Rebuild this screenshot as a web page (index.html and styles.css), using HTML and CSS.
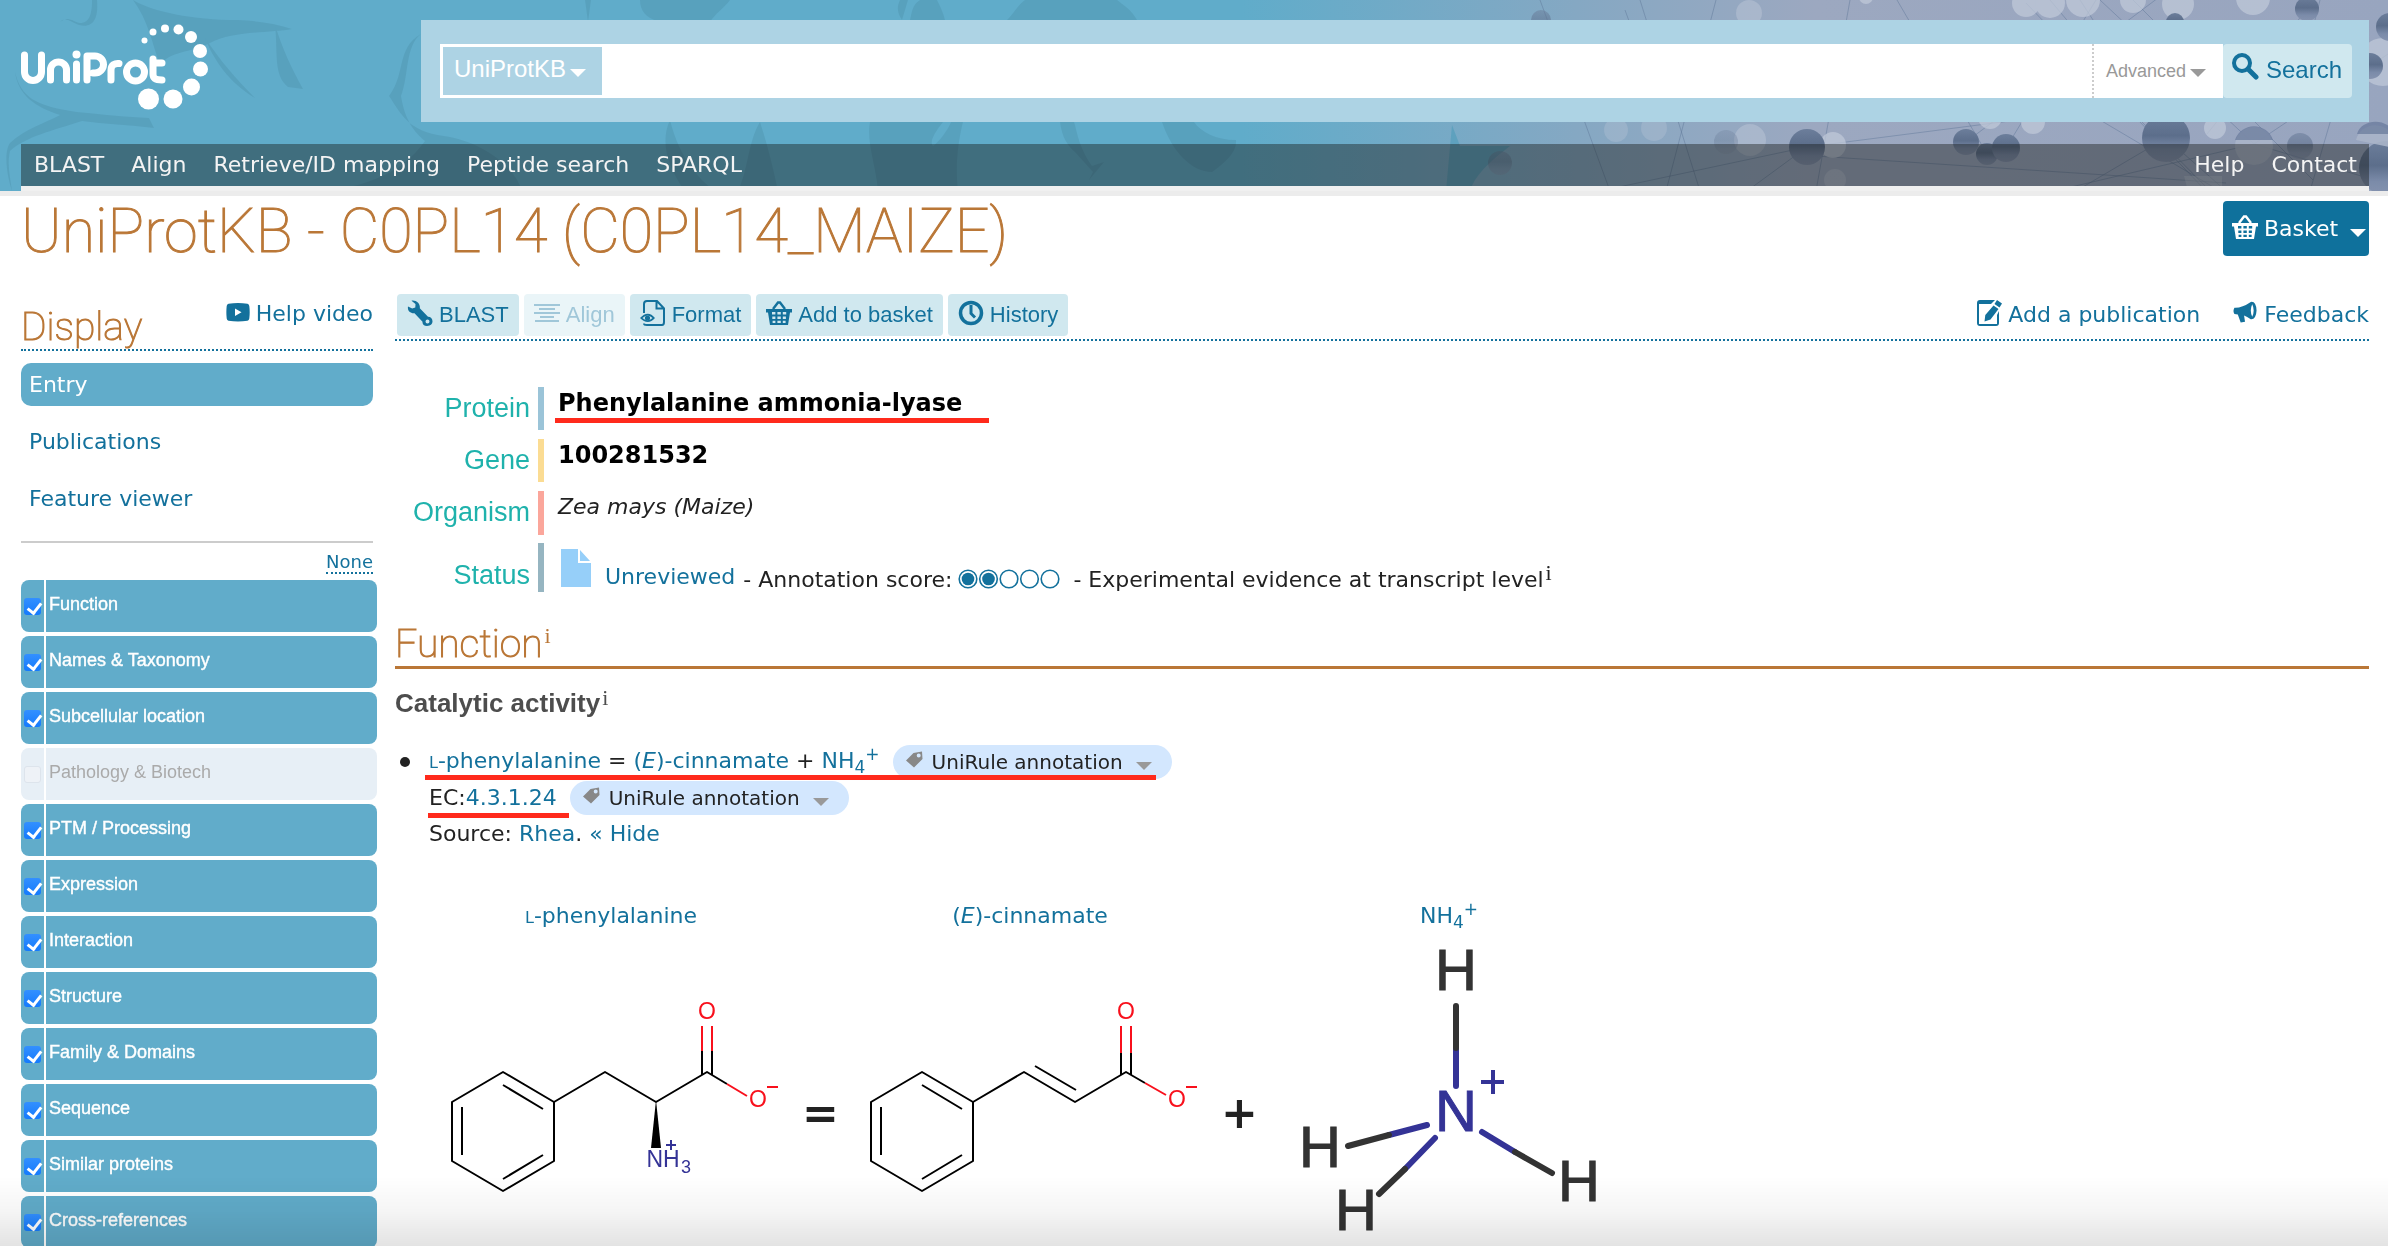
FILE: index.html
```html
<!DOCTYPE html>
<html lang="en">
<head>
<meta charset="utf-8">
<meta name="viewport" content="width=device-width, initial-scale=1">
<title>C0PL14_MAIZE - Phenylalanine ammonia-lyase - UniProtKB</title>
<link rel="stylesheet" href="styles.css">
</head>
<body>
<svg class="sprite" aria-hidden="true">
  <symbol id="i-basket" viewBox="0 0 26 24">
    <path d="M7 8 12 1.5h2L19 8" fill="none" stroke="currentColor" stroke-width="2.4"/>
    <path fill="currentColor" fill-rule="evenodd" d="M0 8h26v3.500h-2L22 24H4L2 11.500H0ZM6 11v2.600h3.400V11Zm5.400 0v2.600h3.400V11Zm5.400 0v2.600h3.400V11ZM6.300 15.400V18h3.100v-2.600Zm5.100 0V18h3.400v-2.600Zm5.400 0V18h3.100v-2.600ZM6.600 19.800V22h2.800v-2.200Zm4.800 0V22h3.400v-2.200Zm5.400 0V22h2.800v-2.200Z"/>
  </symbol>
  <symbol id="i-down" viewBox="0 0 16 8"><path fill="currentColor" d="M0 0h16L8 8Z"/></symbol>
  <symbol id="i-tag" viewBox="0 0 18 17">
    <path fill="currentColor" fill-rule="evenodd" d="M8.500 2 17 .5 17.500 8 9 16.500 1 9.500ZM13.700 2.500a2 2 0 1 0 0 4 2 2 0 0 0 0-4Z"/>
  </symbol>
</svg>

<header class="top">
  <svg class="top-art" viewBox="0 0 2388 191" preserveAspectRatio="xMaxYMid slice" aria-hidden="true">
    <defs>
      <linearGradient id="sky" x1="0" x2="1">
        <stop offset=".52" stop-color="#60acca"/><stop offset=".66" stop-color="#85a8c3"/><stop offset=".76" stop-color="#9ca8c0"/><stop offset="1" stop-color="#98a5bf"/>
      </linearGradient>
      <linearGradient id="ball" x1="0" x2="0" y1="0" y2="1">
        <stop offset="0" stop-color="#6c7e9b"/><stop offset=".45" stop-color="#5c6e8b"/><stop offset=".75" stop-color="#7b8ba9"/><stop offset="1" stop-color="#8593af"/>
      </linearGradient>
    </defs>
    <rect width="2388" height="191" fill="url(#sky)"/>
    <g fill="#579fbb" opacity=".8">
      <path d="M97 0c2 22-6 28-18 25-8-3-14-9-19-3 8-6 10-2 20 1 10 0 12-10 12-23Z"/>
      <path d="M15 72c6 25 20 34 62 40 30 3 50 5 72 6l5 10c-25-3-50-4-72-7-30 10-55 15-72 30-3 14 0 25 2 40-6-18-8-40-2-48 15-14 35-20 50-28-25-8-42-20-45-43Z"/>
      <path d="M133 0c20 12 60 20 105 20 20 1 36 3 54 9-20 4-60 2-82 14-20 10-40 8-50 22-8-22-12-45-27-65Z"/>
      <path d="M275 25c8 25 16 42 28 64l-15-2c-15-12-10-35-13-62ZM205 38c15 22 30 40 50 60-20-12-38-30-50-60Z"/>
      <path d="M421 34c-25 14-15 40-32 62 12 18 20 36 55 40 35 5 70 28 78 55H330c60-10 80-30 95-50-10-8-20-20-24-45 8-20 4-50 20-62Z"/>
      <path d="M585 0h6l-3 22ZM640 0c0 10 5 18 20 22h50c5-8 15-15 20-22ZM900 0c-4 8-2 14 2 20l6-20ZM920 0c-8 5-8 12-10 20h35c-2-8-5-14-8-20ZM1025 0c-8 6-12 14-18 20h130c-5-10-15-16-20-20Z"/>
      <path d="M670 120c10 40 30 60 45 71h-30c-18-25-25-50-15-71ZM893 122h50c-8 10-14 20-10 24 5-3 15-16 18-24h12c-5 20-8 44-5 69h-80c-2-25-12-50-8-69ZM760 122c6 18 12 40 18 69h-40c10-20 10-50 22-69Z"/>
      <path d="M1060 122c2 16 8 24 15 30l18 20-4 8 15-18-12 4c-14-20-15-36-18-44ZM1162 122c10 30 30 50 50 50 14-10 25-20 24-32-20 0-35-8-42-18ZM1452 125l-6 66h24c4-15 20-30 40-45h-50Z"/>
    </g>
    <g stroke="#5d7596" stroke-width="1" opacity=".45" fill="none">
      <path d="M1540 0 1610 191M1600 191 1807 147 2033 118M1640 0l60 191M1716 0l-50 191M1807 147l-60 44M1850 0l-34 191M1966 142l200-150M1800 155l306 20 120 8M1987 154l-90-154M2006 148l90-148M2166 138 2050 0M2166 138l-90 53M2166 138l60 53M2254 144 2100 0M2254 144l-200 47M2307 9l-100 125M2254 144l134-90M2254 144l134 40M2026 3l180 188M2133 0l180 180M2080 0l90 138M2320 0l-30 120M2360 20l-50 171M2140 120l70 71M2100 120l120 71M1625 10l40 110"/>
    </g>
    <g fill="#bfc8d9" opacity=".75">
      <circle cx="1616" cy="130" r="12" opacity=".4"/><circle cx="1654" cy="128" r="13" opacity=".4"/><circle cx="1749" cy="13" r="13" opacity=".6"/><circle cx="1750" cy="140" r="16" opacity=".6"/><circle cx="1833" cy="145" r="13"/><circle cx="1835" cy="180" r="11" opacity=".6"/><circle cx="1866" cy="-3" r="7"/>
      <circle cx="2026" cy="3" r="14"/><circle cx="2050" cy="3" r="15"/><circle cx="2083" cy="0" r="17"/><circle cx="2133" cy="0" r="13"/><circle cx="2178" cy="4" r="16"/><circle cx="2253" cy="-2" r="17"/><circle cx="1990" cy="117" r="12"/><circle cx="2033" cy="122" r="12"/><circle cx="2215" cy="128" r="11"/><circle cx="2383" cy="62" r="24"/>
      <path d="M2184 176h38v15h-34Z" opacity=".6"/>
    </g>
    <g fill="url(#ball)">
      <circle cx="1726" cy="142" r="12" opacity=".3"/><circle cx="1500" cy="163" r="12" opacity=".4"/><circle cx="1541" cy="20" r="10" opacity=".5"/>
      <circle cx="1807" cy="147" r="18"/><circle cx="1966" cy="142" r="13"/><circle cx="1987" cy="154" r="11"/><circle cx="2006" cy="148" r="14"/><circle cx="2166" cy="138" r="24"/><circle cx="2175" cy="22" r="9"/><circle cx="2307" cy="9" r="12"/><circle cx="2300" cy="146" r="13" opacity=".6"/><circle cx="2390" cy="27" r="14"/><circle cx="2370" cy="66" r="13"/><circle cx="2386" cy="168" r="27"/>
    </g>
    <g fill="#aab5c9" opacity=".9"><circle cx="2254" cy="146" r="19"/><path d="M2356 140a20 20 0 0 1 38-2v10Z"/></g>
    <path d="M2235 140a20 20 0 0 1 38 0ZM2357 134a19 16 0 0 1 37 0Z" fill="#66789a" opacity=".7"/>
  </svg>

  <div class="brand-row">
    <a class="brand" href="#" aria-label="UniProt">
      <svg viewBox="0 0 188 86" width="188" height="86" aria-hidden="true">
        <g fill="none" stroke="#fff" stroke-width="7" stroke-linecap="round" stroke-linejoin="round">
          <path d="M3.500 31v17a8.500 8.500 0 0 0 17 0V31M29.500 56V46a8 8 0 0 1 16 0v10M55.500 40v16M66 56V32h8a8.500 8.500 0 0 1 0 17h-2M90 56V46c0-5 4-7 8-6.500M132 35v15c0 4 2 6 9 6M132 39h9"/>
          <circle cx="114.500" cy="48" r="9"/>
        </g>
        <g fill="#fff">
          <circle cx="55.500" cy="30.500" r="4"/><circle cx="123.500" cy="16.500" r="3"/><circle cx="132" cy="8" r="3.500"/><circle cx="144" cy="4.500" r="4"/><circle cx="157.500" cy="5.500" r="5"/><circle cx="170" cy="13" r="6"/><circle cx="179" cy="27" r="7"/><circle cx="179.500" cy="45" r="7.500"/><circle cx="170.500" cy="63" r="8.500"/><circle cx="152" cy="75" r="9.500"/><circle cx="127.500" cy="75" r="10.500"/>
        </g>
      </svg>
    </a>
    <form class="search" role="search">
      <div class="dataset">
        <select aria-label="Dataset"><option>UniProtKB</option><option>UniRef</option><option>UniParc</option></select>
        <svg class="down" aria-hidden="true"><use href="#i-down"/></svg>
      </div>
      <input class="query" type="text" aria-label="Search query">
      <button class="advanced" type="button">Advanced <svg class="down" aria-hidden="true"><use href="#i-down"/></svg></button>
      <button class="go" type="submit">
        <svg width="27" height="27" viewBox="0 0 27 27" aria-hidden="true"><circle cx="10" cy="10" r="8" fill="none" stroke="currentColor" stroke-width="4"/><path d="m16 16 8 8" stroke="currentColor" stroke-width="5" stroke-linecap="round"/></svg>
        Search
      </button>
    </form>
  </div>
  <nav class="mainnav">
    <a href="#">BLAST</a><a href="#">Align</a><a href="#">Retrieve/ID mapping</a><a href="#">Peptide search</a><a href="#">SPARQL</a>
    <a class="right" href="#">Help</a><a href="#">Contact</a>
  </nav>
</header>

<div class="title-row">
  <h1>UniProtKB - C0PL14 (C0PL14_MAIZE)</h1>
  <button class="basket" type="button"><svg width="26" height="24" aria-hidden="true"><use href="#i-basket"/></svg><span>Basket</span><svg class="down" aria-hidden="true"><use href="#i-down"/></svg></button>
</div>

<div class="columns">
  <aside class="side">
    <div class="side-head">
      <h2>Display</h2>
      <a class="iconlink" href="#"><svg width="24" height="19" viewBox="0 0 24 19" aria-hidden="true"><path fill="currentColor" fill-rule="evenodd" d="M2.500.8Q12-.6 21.500.8 23 1 23.300 3q.8 6 0 12.500-.3 2-1.800 2.300-9.500 1.300-19 0Q1 17.500.7 15.500 0 9 .7 3 1 1 2.500.8ZM9 5.500v7.500l6.500-3.700Z"/></svg>Help video</a>
    </div>
    <nav class="views"><a class="on" href="#">Entry</a><a href="#">Publications</a><a href="#">Feature viewer</a></nav>
    <div class="none"><a href="#">None</a></div>
    <ul class="sections">
      <li><label><input type="checkbox" checked><span>Function</span></label></li>
      <li><label><input type="checkbox" checked><span>Names &amp; Taxonomy</span></label></li>
      <li><label><input type="checkbox" checked><span>Subcellular location</span></label></li>
      <li class="off"><label><input type="checkbox" disabled><span>Pathology &amp; Biotech</span></label></li>
      <li><label><input type="checkbox" checked><span>PTM / Processing</span></label></li>
      <li><label><input type="checkbox" checked><span>Expression</span></label></li>
      <li><label><input type="checkbox" checked><span>Interaction</span></label></li>
      <li><label><input type="checkbox" checked><span>Structure</span></label></li>
      <li><label><input type="checkbox" checked><span>Family &amp; Domains</span></label></li>
      <li><label><input type="checkbox" checked><span>Sequence</span></label></li>
      <li><label><input type="checkbox" checked><span>Similar proteins</span></label></li>
      <li><label><input type="checkbox" checked><span>Cross-references</span></label></li>
    </ul>
  </aside>

  <main class="main">
    <div class="toolbar">
      <button type="button"><svg width="26" height="26" viewBox="0 0 26 26" aria-hidden="true"><path fill="currentColor" fill-rule="evenodd" d="M4.500.7 8.500 4 8.300 7.500 5.200 8.600 1 6.500C.3 10.500 3 13.500 7.500 13.200l8 8.600c-.3 2.500 1.500 4.200 4.500 4.200 4 0 5.500-2.500 5.500-4.700 0-2.800-2-4.600-4.500-4.500L12.800 8.200C13.500 4 9.500-.2 4.500.7ZM20.500 19.500a2 2 0 1 0 0 4 2 2 0 0 0 0-4Z"/></svg>BLAST</button>
      <button type="button" disabled><svg width="26" height="26" viewBox="0 0 26 26" aria-hidden="true"><path d="M0 5h26M5 9h16M0 13h26M6 17h14M1 21h24" stroke="currentColor" stroke-width="2"/></svg>Align</button>
      <button type="button"><svg width="26" height="26" viewBox="0 0 26 26" aria-hidden="true"><path d="M4 13V4q0-3 3-3h10l7 7.500V22q0 3-2 3H7q-3 0-3-1.500M16.500 1v7.500H24" fill="none" stroke="currentColor" stroke-width="2"/><path fill="currentColor" fill-rule="evenodd" d="M0 18q8-8.500 15 0-7 8-15 0Zm2.500 0q5 4.500 10 0-5-5-10 0Z"/><circle cx="7.500" cy="18" r="2.600" fill="currentColor"/></svg>Format</button>
      <button type="button"><svg width="26" height="26" aria-hidden="true"><use href="#i-basket"/></svg>Add to basket</button>
      <button type="button"><svg width="26" height="26" viewBox="0 0 26 26" aria-hidden="true"><circle cx="13" cy="13" r="10.500" fill="none" stroke="currentColor" stroke-width="3.500"/><path d="M13 5v8.500l4 4" fill="none" stroke="currentColor" stroke-width="3"/></svg>History</button>
      <a class="iconlink right" href="#"><svg width="25" height="26" viewBox="0 0 25 26" aria-hidden="true"><path fill="currentColor" fill-rule="evenodd" d="M3 0h15l-4 4H2v20h18v-9l2-4v12q0 3-3 3H3q-3 0-3-3V3q0-3 3-3Z"/><path fill="currentColor" d="m20 0 5 3.500-2.500 4-5-3.500ZM16.500 5.500l5 3.500-8 10.500-6 2 .8-6.500Z"/></svg>Add a publication</a>
      <a class="iconlink" href="#"><svg width="25" height="26" viewBox="0 0 26 26" aria-hidden="true"><path fill="currentColor" fill-rule="evenodd" d="M1.500 7.500Q9 8 18.500 1.500q5.500-1 6 9-.5 9.500-6 9-4-3-7-4l1 6.500-4.500 1L5 14.500l-3.500-.5q-2-3 0-6.500ZM20 4q-3 6.500 0 13 3-6.500 0-13Z"/></svg>Feedback</a>
    </div>

    <dl class="facts">
      <dt>Protein</dt><dd class="protein"><strong class="marked">Phenylalanine ammonia-lyase</strong></dd>
      <dt>Gene</dt><dd class="gene"><strong>100281532</strong></dd>
      <dt>Organism</dt><dd class="organism"><em>Zea mays (Maize)</em></dd>
      <dt class="low">Status</dt>
      <dd class="status">
        <svg width="30" height="38" viewBox="0 0 30 38" aria-hidden="true"><path fill="#96cff9" d="M0 0h17v14h13v24H0ZM19 1l10 11H19Z"/></svg>
        <a href="#">Unreviewed</a><span>- Annotation score:</span>
        <svg class="score" width="102" height="20" viewBox="0 0 102 20" role="img" aria-label="Annotation score: 2 out of 5"><g fill="none" stroke="#13719c" stroke-width="1.600"><circle cx="10" cy="10" r="8.800"/><circle cx="30.500" cy="10" r="8.800"/><circle cx="51" cy="10" r="8.800"/><circle cx="71.500" cy="10" r="8.800"/><circle cx="92" cy="10" r="8.800"/></g><g fill="#13719c"><circle cx="10" cy="10" r="6.300"/><circle cx="30.500" cy="10" r="6.300"/></g></svg>
        <span>- Experimental evidence at transcript level<sup class="info">i</sup></span>
      </dd>
    </dl>

    <section>
      <h2 class="section-title">Function<sup class="info">i</sup></h2>
      <h3>Catalytic activity<sup class="info">i</sup></h3>
      <ul class="activity">
        <li>
          <div class="line"><span class="equation"><a href="#"><small>L</small>-phenylalanine</a> = <a href="#">(<i>E</i>)-cinnamate</a> + <a href="#">NH<sub>4</sub><sup>+</sup></a></span><button class="pill" type="button"><svg width="18" height="17" aria-hidden="true"><use href="#i-tag"/></svg>UniRule annotation<svg class="down" aria-hidden="true"><use href="#i-down"/></svg></button></div>
          <div class="line"><span class="ec">EC:<a href="#">4.3.1.24</a></span><button class="pill" type="button"><svg width="18" height="17" aria-hidden="true"><use href="#i-tag"/></svg>UniRule annotation<svg class="down" aria-hidden="true"><use href="#i-down"/></svg></button></div>
          <div class="line"><span>Source: <a href="#">Rhea</a>. <a href="#">« Hide</a></span></div>
        </li>
      </ul>

      <div class="reaction">
        <figure>
          <figcaption><a href="#"><small>L</small>-phenylalanine</a></figcaption>
          <svg viewBox="426 931 370 320" width="370" height="320" role="img" aria-label="L-phenylalanine structure">
            <g fill="none" stroke="#000" stroke-width="2" stroke-linejoin="round">
              <path d="M503 1072 452 1102v59l51 30 51-30v-59ZM462 1107v48M503 1085l40 24M543 1155l-40 24M554 1102l51-30 51 30 51-30 20 12M702 1075v-24M712 1075v-24"/>
              <path d="m727 1084 20 12M702 1051v-25M712 1051v-25M767 1087h11" stroke="#f8101c"/>
              <path d="M666 1145h10M671 1140v10" stroke="#343396"/>
            </g>
            <path d="M656 1100l-5 48h10Z"/>
            <g class="atom" text-anchor="middle"><text x="707" y="1019" fill="#f8101c">O</text><text x="758" y="1107" fill="#f8101c">O</text><g fill="#343396"><text x="663" y="1167">NH</text><text class="small" x="686" y="1173">3</text></g></g>
          </svg>
        </figure>
        <span class="op">=</span>
        <figure>
          <figcaption><a href="#">(<i>E</i>)-cinnamate</a></figcaption>
          <svg viewBox="845 931 370 320" width="370" height="320" role="img" aria-label="(E)-cinnamate structure">
            <g fill="none" stroke="#000" stroke-width="2" stroke-linejoin="round">
              <path d="M922 1072 871 1102v59l51 30 51-30v-59ZM881 1107v48M922 1085l40 24M962 1155l-40 24M973 1102l51-30 51 30 51-30 19 11M1035 1066l41 24M1121 1075v-22M1131 1075v-22"/>
              <path d="m1145 1083 21 12M1121 1053v-27M1131 1053v-27M1186 1087h11" stroke="#f8101c"/>
            </g>
            <g class="atom" text-anchor="middle" fill="#f8101c"><text x="1126" y="1019">O</text><text x="1177" y="1107">O</text></g>
          </svg>
        </figure>
        <span class="op">+</span>
        <figure>
          <figcaption><a href="#">NH<sub>4</sub><sup>+</sup></a></figcaption>
          <svg viewBox="1264 931 370 320" width="370" height="320" role="img" aria-label="Ammonium structure">
            <g fill="none" stroke-width="6" stroke-linecap="round">
              <path stroke="#343396" d="M1456 1049v37M1389 1135l38-10M1405 1169l30-31M1482 1132l33 20"/>
              <path stroke="#333" d="M1456 1006v42M1348 1146l41-11M1379 1194l26-25M1515 1152l37 21"/>
              <path stroke="#343396" stroke-width="4" stroke-linecap="butt" d="M1481 1082h23M1493 1070v24"/>
            </g>
            <g class="big" text-anchor="middle" fill="#333" stroke="#333"><text x="1456" y="990">H</text><text x="1456" y="1131" fill="#343396" stroke="#343396">N</text><text x="1320" y="1167">H</text><text x="1356" y="1230">H</text><text x="1579" y="1201">H</text></g>
          </svg>
        </figure>
      </div>
    </section>
  </main>
</div>
<div class="shade"></div>
</body>
</html>
```
FILE: styles.css
```css
* { box-sizing: border-box; }
html, body { margin: 0; }
html { overflow-x: hidden; }
body {
  background: #fff;
  color: #222;
  font: 22px/36px "DejaVu Sans", Verdana, sans-serif;
}
a { color: #13719c; text-decoration: none; }
button, input, select { font: inherit; margin: 0; border: 0; border-radius: 0; }
button { cursor: pointer; white-space: nowrap; }
svg { flex: none; }
ul, dl, dd, h1, h2, h3, figure { margin: 0; padding: 0; }
ul { list-style: none; }
.sprite { position: absolute; width: 0; height: 0; }
.down { width: 16px; height: 8px; }
.right { margin-left: auto; }

/* header */
.top { position: relative; border-bottom: 5px solid #ececec; padding: 20px 19px 0 21px; overflow: hidden; }
.top-art { position: absolute; left: 0; top: 0; width: 100%; height: 100%; z-index: -1; }
.brand-row { display: flex; }
.brand { width: 400px; flex: none; padding-top: 4px; line-height: 0; }
.search { flex: 1; display: flex; height: 102px; padding: 24px 17px 24px 19px; background: #add3e4; }
.dataset { position: relative; width: 162px; flex: none; border: 3px solid #fff; border-right: 0; background: #add3e4; }
.dataset select { appearance: none; width: 100%; height: 48px; padding: 0 0 6px 11px; background: transparent; color: #fff; font: 24px "Liberation Sans", Arial, sans-serif; }
.dataset .down { position: absolute; right: 16px; top: 22px; color: #fff; pointer-events: none; }
.query { flex: 1; min-width: 0; background: #fff; padding: 0 10px; }
.advanced { display: flex; align-items: center; gap: 4px; width: 131px; padding: 0 0 0 12px; border-left: 2px dotted #ccc; background: #fff; color: #999; font: 18px "Liberation Sans", Arial, sans-serif; }
.advanced .down { margin-top: 4px; }
.go { display: flex; align-items: center; gap: 7px; width: 129px; padding: 0 0 2px 9px; border-radius: 4px; background: #d0e8ef; color: #13719c; font: 24px "Liberation Sans", Arial, sans-serif; }
.go svg { margin-bottom: 8px; }
.mainnav { display: flex; gap: 27px; margin-top: 22px; padding: 0 12px 0 13px; border-bottom: 5px solid #f0f0f0; background: rgba(22, 24, 22, .42); background-clip: padding-box; line-height: 42px; }
.mainnav a { color: #f4f4f4; }

/* entry title */
.title-row { display: flex; justify-content: space-between; align-items: flex-start; padding: 0 19px 0 21px; }
h1, h2 { color: #ba7737; font-family: Roboto, "Helvetica Neue", sans-serif; font-weight: 100; -webkit-text-stroke: 1px; }
h1 { font-size: 61px; line-height: 70px; }
.basket { display: flex; align-items: center; gap: 6px; width: 146px; height: 55px; margin-top: 5px; padding: 0 3px 0 9px; border-radius: 4px; background: #0f719c; color: #fff; }
.basket svg { margin-bottom: 3px; }
.basket .down { margin: 8px 0 0 auto; }

.columns { display: grid; grid-template-columns: 352px minmax(0, 1fr); column-gap: 22px; padding: 0 19px 0 21px; }

/* left column */
.side-head { display: flex; justify-content: space-between; align-items: flex-end; height: 85px; border-bottom: 2px dotted #13719c; }
.side-head h2 { font-size: 39px; line-height: 44px; }
.iconlink { display: flex; align-items: center; gap: 6px; height: 30px; }
.side-head .iconlink { margin-bottom: 20px; }
.side-head svg { margin-bottom: 4px; }
.views { display: grid; gap: 14px; padding: 12px 0 21px; border-bottom: 2px solid #ccc; line-height: 43px; }
.views a { padding-left: 8px; border-radius: 10px; }
.views .on { background: #61acca; color: #fff; }
.none { display: flex; justify-content: flex-end; margin: 9px 0 6px; font-size: 18px; line-height: 20px; }
.none a { border-bottom: 2px dotted #13719c; }
.sections { display: grid; gap: 4px; width: 356px; font: 18px/48px "Liberation Sans", Arial, sans-serif; }
.sections label { display: flex; height: 52px; border-radius: 8px; background: #61acca; color: #fff; -webkit-text-stroke: 0.4px; }
.sections input { appearance: none; flex: none; width: 17px; height: 17px; margin: 18px 3px; border-radius: 3px; background: linear-gradient(#3390ff, #147afd); }
.sections input:checked::after { content: ""; display: block; width: 6px; height: 11px; margin: 2px 0 0 6px; border: solid #fff; border-width: 0 3px 3px 0; transform: rotate(38deg); }
.sections span { flex: 1; padding-left: 3px; border-left: 2px solid #fff; }
.sections .off label { background: #e7eff6; color: #aaa; -webkit-text-stroke: 0; }
.sections .off input { background: #eef2f7; border: 1px solid #dde4ec; }

/* tools */
.toolbar { display: flex; align-items: flex-end; gap: 5px; height: 75px; padding: 0 0 3px 2px; border-bottom: 2px dotted #13719c; }
.toolbar button { display: flex; align-items: center; gap: 6px; height: 42px; padding: 0 10px; border-radius: 4px; background: #d0e8ef; color: #13719c; font: 22px "Liberation Sans", Arial, sans-serif; }
.toolbar button svg { margin-bottom: 4px; }
.toolbar button:disabled { background: #eaf5f8; color: #a0c7d9; }
.toolbar .iconlink { margin-bottom: 6px; }
.toolbar .iconlink + .iconlink { margin-left: 28px; }
.toolbar .iconlink svg { margin-bottom: 4px; }

/* entry facts */
.facts { display: grid; grid-template-columns: 135px 1fr; column-gap: 8px; row-gap: 8px; padding-top: 46px; }
.facts dt { color: #1fb2ac; font: 27px/42px "Liberation Sans", Arial, sans-serif; text-align: right; }
.facts .low { align-self: end; line-height: 34px; }
.facts dd { height: 43px; padding-left: 14px; border-left: 6px solid; line-height: 32px; }
.facts strong { color: #000; font-size: 24px; }
.facts .protein { border-color: #9bc4d8; }
.facts .gene { border-color: #fbdc93; }
.facts .organism { height: 44px; border-color: #fba69b; }
.facts .protein, .facts .gene { margin-bottom: 1px; }
.facts .status { display: flex; align-items: flex-end; height: 49px; padding-left: 17px; border-color: #96b5c1; line-height: 24px; white-space: nowrap; }
.status > svg { margin-bottom: 5px; }
.status a { margin: 0 8px 3px 14px; }
.status .score { margin: 0 13px 3px 6px; }
.marked { position: relative; display: inline-block; }
.marked::after, .equation::after, .ec::after { content: ""; position: absolute; z-index: 1; height: 5px; background: #ff2a1c; }
.marked::after { left: -3px; right: -27px; top: 31px; }
.info { font-family: "Liberation Serif", serif; font-size: 22px; font-weight: 400; line-height: 0; vertical-align: 7px; padding-left: 2px; -webkit-text-stroke: 0; }

/* function */
.section-title { margin-top: 30px; border-bottom: 3px solid #ba7737; font-size: 39px; line-height: 44px; }
.section-title .info { vertical-align: 14px; }
h3 { margin: 16px 0 23px; color: #4d4d4d; font: bold 26px/36px "Liberation Sans", Arial, sans-serif; }
.activity { padding-left: 34px; }
.activity li { position: relative; }
.activity li::before { content: ""; position: absolute; left: -29px; top: 13px; width: 10px; height: 10px; border-radius: 5px; background: #222; }
.line { display: flex; align-items: center; height: 36px; }
small { font-size: 16px; }
sub, sup { font-size: 17px; line-height: 0; }
sub { vertical-align: -5px; }
sup { vertical-align: 8px; }
.equation, .ec { position: relative; }
.equation::after { left: -4px; right: -276px; top: 32px; }
.ec::after { left: -1px; right: -12px; top: 33px; }
.pill { display: flex; align-items: center; height: 34px; margin-left: 13px; padding: 0 20px 0 12px; border-radius: 17px; background: #d3e7fe; color: #222; font-size: 20px; }
.pill svg { color: #888; margin: 0 9px 6px 0; }
.pill .down { margin: 8px 0 0 13px; color: #999; }

/* reaction */
.reaction { display: grid; grid-template-columns: 370px 49px 370px 49px 370px; margin: 49px 0 0 31px; text-align: center; line-height: 30px; }
.reaction figcaption { height: 30px; }
.reaction svg { display: block; }
.op { padding-top: 188px; font-size: 44px; font-weight: 700; line-height: 48px; }
.atom { font: 23px "Liberation Sans", Arial, sans-serif; stroke-width: 0; }
.atom .small { font-size: 18px; }
.big { font: 58px "Liberation Sans", Arial, sans-serif; stroke-width: 1px; }

.shade { position: fixed; left: 0; right: 0; bottom: 0; height: 70px; background: linear-gradient(rgba(0, 0, 0, 0), rgba(0, 0, 0, .04) 50%, rgba(0, 0, 0, .11)); pointer-events: none; }
```
